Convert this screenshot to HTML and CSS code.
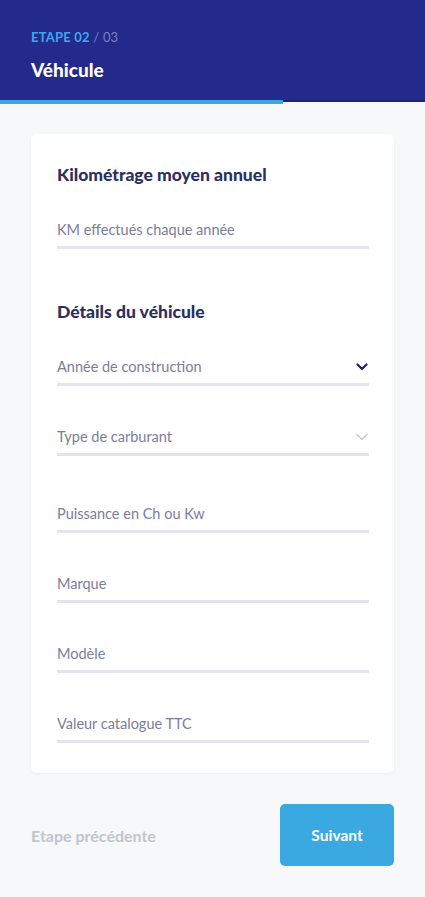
FILE: index.html
```html
<!DOCTYPE html>
<html lang="fr">
<head>
<meta charset="utf-8">
<title>Véhicule</title>
<link rel="stylesheet" href="styles.css">
</head>
<body>
<header class="header">
  <div class="step"><span class="step-current">ETAPE 02</span><span class="step-total"> / 03</span></div>
  <h1 class="title">Véhicule</h1>
</header>
<div class="progress"><div class="progress-fill" style="width:283px"></div></div>

<main class="content">
  <section class="card">
    <h2 class="section-title">Kilométrage moyen annuel</h2>
    <div class="field field-first"><span class="label">KM effectués chaque année</span></div>

    <h2 class="section-title section-second">Détails du véhicule</h2>
    <div class="field field-first field-select">
      <span class="label">Année de construction</span>
      <svg class="chev chev-active" width="12" height="8" viewBox="0 0 12 8"><path d="M1.5 1.5 L6 6 L10.5 1.5" fill="none" stroke="currentColor" stroke-width="2.2" stroke-linecap="round" stroke-linejoin="round"/></svg>
    </div>
    <div class="field field-select">
      <span class="label">Type de carburant</span>
      <svg class="chev chev-idle" width="12" height="8" viewBox="0 0 12 8"><path d="M1 1.5 L6 6.5 L11 1.5" fill="none" stroke="currentColor" stroke-width="1.3" stroke-linecap="round" stroke-linejoin="round"/></svg>
    </div>
    <div class="field field-wide"><span class="label">Puissance en Ch ou Kw</span></div>
    <div class="field"><span class="label">Marque</span></div>
    <div class="field"><span class="label">Modèle</span></div>
    <div class="field"><span class="label">Valeur catalogue TTC</span></div>
  </section>

  <footer class="actions">
    <span class="prev">Etape précédente</span>
    <button class="next">Suivant</button>
  </footer>
</main>
</body>
</html>
```

FILE: styles.css
```css
* { box-sizing: border-box; }
html, body { margin: 0; padding: 0; }
body {
  background: #f7f8fa;
  font-family: Lato, "Open Sans", sans-serif;
  width: 425px;
  min-height: 897px;
}
.header {
  background: #232a8c;
  height: 100px;
  padding: 29px 31px 0;
}
.step {
  font-size: 13px;
  line-height: 16px;
  font-weight: 700;
  letter-spacing: 0.2px;
}
.step-current { color: #3ea7ea; }
.step-total { color: #7c81be; font-weight: 400; }
.title {
  margin: 14px 0 0;
  color: #ffffff;
  font-size: 19px;
  line-height: 22px;
  font-weight: 900;
}
.progress {
  height: 4px;
  background: linear-gradient(#1c2278 0 2px, transparent 2px);
}
.progress-fill {
  height: 4px;
  background: #3aa6e2;
}
.content {
  padding: 30px 31px 0;
}
.card {
  background: #ffffff;
  border-radius: 5px;
  box-shadow: 0 1px 3px rgba(40, 45, 90, 0.06);
  padding: 31px 25px 30px 26px;
}
.section-title {
  margin: 0;
  font-size: 17.5px;
  line-height: 20px;
  font-weight: 900;
  color: #2b2f5f;
}
.section-second { margin-top: 53px; }
.field {
  display: flex;
  align-items: center;
  justify-content: space-between;
  height: 29px;
  padding-bottom: 6px;
  border-bottom: 3px solid #e4e4f1;
  margin-top: 41px;
}
.field-first { margin-top: 35px; }
.field-wide { margin-top: 48px; }
.label {
  font-size: 14.5px;
  line-height: 20px;
  color: #7a7d9b;
}
.chev { margin-right: 1px; }
.chev-active { color: #1f2470; }
.chev-idle { color: #c3c5da; }
.actions {
  display: flex;
  align-items: center;
  justify-content: space-between;
  margin-top: 31px;
}
.prev {
  font-size: 16px;
  font-weight: 700;
  color: #c3c5cc;
}
.next {
  width: 114px;
  height: 62px;
  border: none;
  border-radius: 5px;
  background: #3aa9e1;
  color: #ffffff;
  font-family: Lato, "Open Sans", sans-serif;
  font-size: 15.5px;
  font-weight: 700;
}
```
